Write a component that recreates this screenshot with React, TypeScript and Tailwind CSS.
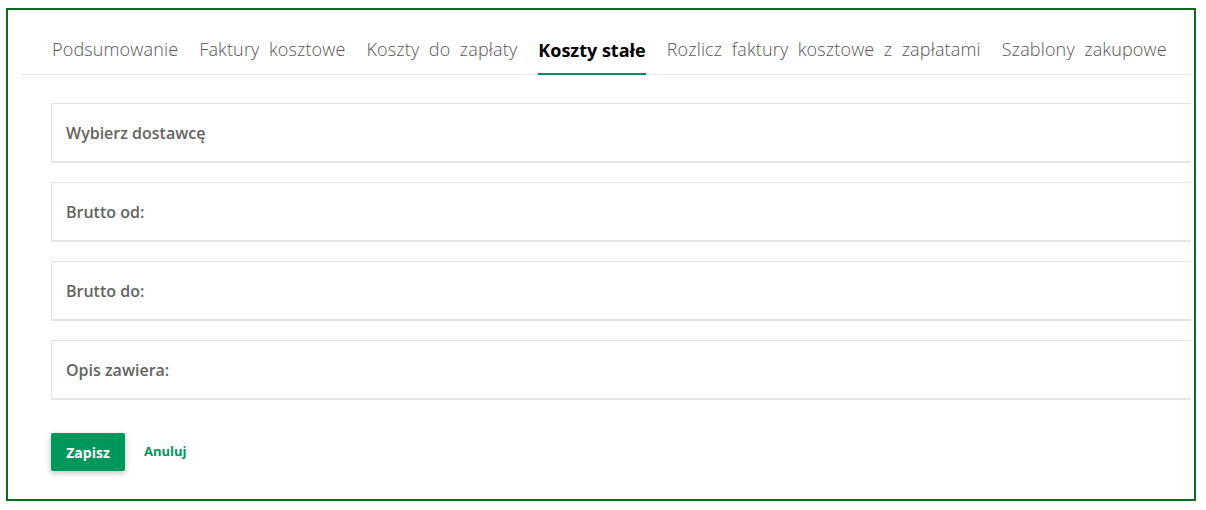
const tabs = [
  "Podsumowanie",
  "Faktury kosztowe",
  "Koszty do zapłaty",
  "Koszty stałe",
  "Rozlicz faktury kosztowe z zapłatami",
  "Szablony zakupowe",
];

const fields = ["Wybierz dostawcę", "Brutto od:", "Brutto do:", "Opis zawiera:"];

export default function App() {
  return (
    <div className="w-[1206px] h-[510px] bg-white pl-[6px] pt-[8px] font-['Open_Sans',sans-serif]">
      <div className="w-[1190px] h-[493px] border-2 border-[#0b6b1f] bg-white">
        {/* Tabs */}
        <nav className="ml-[13px] mr-[4px] h-[65px] flex items-end gap-[21px] pl-[31px] border-b border-[#e6e6e6]">
          {tabs.map((t) => {
            const active = t === "Koszty stałe";
            return (
              <a
                key={t}
                href="#"
                className={
                  active
                    ? "pb-[11px] text-[18px] leading-[24px] font-bold text-black border-b-2 border-[#008c5a] -mb-px"
                    : "pb-[13px] text-[18px] leading-[24px] font-light text-[#555] tracking-[0.15px] [word-spacing:4.6px]"
                }
              >
                {t}
              </a>
            );
          })}
        </nav>

        {/* Form */}
        <div className="ml-[43px] mr-[3px] mt-[28px] flex flex-col gap-[19px]">
          {fields.map((f) => (
            <div
              key={f}
              className="h-[60px] flex items-center pl-[14px] border border-b-2 border-[#e5e5e5] border-r-0"
            >
              <span className="text-[16px] font-semibold text-[#636363]">{f}</span>
            </div>
          ))}
        </div>

        <div className="ml-[43px] mt-[33px] flex items-center gap-[19px]">
          <button className="w-[74px] h-[38px] bg-[#00975c] text-white text-[14px] font-bold rounded-[2px] shadow-[0_2px_6px_rgba(0,0,0,0.25)]">
            Zapisz
          </button>
          <a href="#" className="text-[13px] font-bold text-[#00975c]">
            Anuluj
          </a>
        </div>
      </div>
    </div>
  );
}
